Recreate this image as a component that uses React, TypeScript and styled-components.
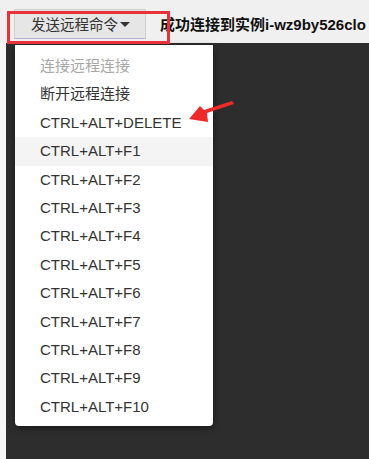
import React from "react";
import styled, { createGlobalStyle } from "styled-components";

const Global = createGlobalStyle`
  html, body { margin: 0; padding: 0; }
  body { background: #f3f3f3; font-family: "Liberation Sans", "Noto Sans CJK SC", sans-serif; overflow: hidden; }
`;

const Page = styled.div`
  position: relative;
  width: 369px;
  height: 459px;
  display: flex;
  flex-direction: column;
  overflow: hidden;
`;

const Header = styled.div`
  height: 43px;
  flex: none;
  background: #f0f0f0;
  display: flex;
  align-items: center;
  padding-left: 14px;
  gap: 14px;
  white-space: nowrap;
  overflow: hidden;
`;

const CmdButton = styled.div`
  box-sizing: border-box;
  flex: none;
  width: 132px;
  height: 30px;
  margin-top: 4px;
  background: #e6e6e6;
  border: 1px solid #cfcfcf;
  border-bottom-color: #b9b4d6;
  display: flex;
  align-items: center;
  padding-left: 16px;
  font-size: 14.5px;
  color: #333;
`;

const Caret = styled.span`
  display: inline-block;
  width: 0;
  height: 0;
  margin-left: 2px;
  margin-top: 2px;
  border-left: 5px solid transparent;
  border-right: 5px solid transparent;
  border-top: 5px solid #333;
`;

const Status = styled.div`
  flex: 1;
  min-width: 0;
  overflow: hidden;
  font-size: 15px;
  font-weight: bold;
  color: #111;
  margin-top: 4px;
`;

const Body = styled.div`
  flex: 1;
  display: flex;
`;

const Strip = styled.div`
  width: 6px;
  background: #f7f7f7;
`;

const Dark = styled.div`
  flex: 1;
  background: #2d2d2d;
`;

const Menu = styled.div`
  position: absolute;
  left: 15px;
  top: 45px;
  width: 198px;
  background: #fff;
  border-radius: 0 0 4px 4px;
  box-shadow: 0 2px 6px rgba(0, 0, 0, 0.5);
  padding: 7px 0 5px;
`;

const Item = styled.div<{ $disabled?: boolean; $hover?: boolean }>`
  height: 28.4px;
  line-height: 28.4px;
  padding-left: 25px;
  font-size: 15px;
  color: ${(p) => (p.$disabled ? "#a8a8a8" : "#333")};
  background: ${(p) => (p.$hover ? "#f4f4f4" : "transparent")};
`;

const RedBox = styled.div`
  position: absolute;
  left: 7px;
  top: 11px;
  width: 163px;
  height: 33px;
  box-sizing: border-box;
  border: 3px solid #e8323a;
`;

const Arrow = styled.svg`
  position: absolute;
  left: 185px;
  top: 98px;
`;

const items = [
  "断开远程连接",
  "CTRL+ALT+DELETE",
  "CTRL+ALT+F1",
  "CTRL+ALT+F2",
  "CTRL+ALT+F3",
  "CTRL+ALT+F4",
  "CTRL+ALT+F5",
  "CTRL+ALT+F6",
  "CTRL+ALT+F7",
  "CTRL+ALT+F8",
  "CTRL+ALT+F9",
  "CTRL+ALT+F10",
];

export default function App() {
  return (
    <>
      <Global />
      <Page>
        <Header>
          <CmdButton>
            发送远程命令
            <Caret />
          </CmdButton>
          <Status>成功连接到实例i-wz9by526clo</Status>
        </Header>
        <Body>
          <Strip />
          <Dark />
        </Body>
        <Menu>
          <Item $disabled>连接远程连接</Item>
          {items.map((t) => (
            <Item key={t} $hover={t === "CTRL+ALT+F1"}>
              {t}
            </Item>
          ))}
        </Menu>
        <RedBox />
        <Arrow width="52" height="30" viewBox="0 0 52 30">
          <polygon
            points="47,3 49,6 22,15 23,24 4,21 15,8 19,12"
            fill="#ee2a2a"
          />
        </Arrow>
      </Page>
    </>
  );
}
